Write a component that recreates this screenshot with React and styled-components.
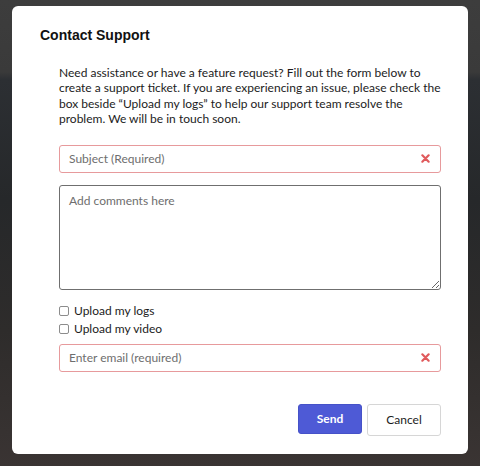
import React from "react";
import styled, { createGlobalStyle } from "styled-components";

const Global = createGlobalStyle`
  html, body { margin: 0; padding: 0; }
  body {
    width: 480px;
    height: 466px;
    overflow: hidden;
    background: linear-gradient(180deg, #3d3d3d 0px, #3a3a3a 72px, #2c2f33 80px, #26282a 200px, #2e2c2b 330px, #3a3433 466px);
  }
`;

const Backdrop = styled.div`
  width: 480px;
  height: 466px;
  padding: 6px 12px 12px 12px;
  box-sizing: border-box;
`;

const Modal = styled.div`
  height: 448px;
  background: #fff;
  border-radius: 6px;
  box-sizing: border-box;
  padding: 20px 27px 0 28px;
  display: flex;
  flex-direction: column;
`;

const Title = styled.h2`
  margin: 0;
  font-family: "Liberation Sans", Arial, sans-serif;
  font-weight: 700;
  font-size: 14px;
  line-height: 18px;
  color: #111;
`;

const Body = styled.div`
  padding-left: 19px;
  margin-top: 21px;
  display: flex;
  flex-direction: column;
  font-family: Lato, "Noto Sans", sans-serif;
`;

const Intro = styled.p`
  margin: 0;
  font-size: 12px;
  line-height: 15.4px;
  color: #1c1c1c;
`;

const Field = styled.div`
  height: 28px;
  box-sizing: border-box;
  border: 1px solid ${p => (p.$invalid ? "#e79a9c" : "#8a8a8a")};
  border-radius: 3px;
  margin-top: ${p => p.$mt}px;
  display: flex;
  align-items: center;
  padding: 0 9px;
`;

const Input = styled.input`
  flex: 1;
  border: none;
  outline: none;
  font-family: Lato, "Noto Sans", sans-serif;
  font-size: 12px;
  color: #222;
  padding: 0;
  background: transparent;
  &::placeholder { color: #6e6e6e; }
`;

const ClearIcon = styled.svg`
  width: 9px;
  height: 9px;
  flex: none;
  margin-right: 1px;
`;

const Textarea = styled.textarea`
  margin-top: 12px;
  height: 105px;
  box-sizing: border-box;
  border: 1px solid #6f6f6f;
  border-radius: 3px;
  padding: 7px 9px;
  font-family: Lato, "Noto Sans", sans-serif;
  font-size: 12px;
  resize: vertical;
  outline: none;
  &::placeholder { color: #6e6e6e; }
`;

const Checks = styled.div`
  margin-top: 14px;
  display: flex;
  flex-direction: column;
  gap: 4px;
`;

const CheckRow = styled.label`
  display: flex;
  align-items: center;
  gap: 5px;
  font-size: 12px;
  line-height: 14px;
  color: #1c1c1c;
`;

const Box = styled.span`
  width: 10px;
  height: 10px;
  border: 1px solid #8c8c8c;
  border-radius: 2px;
  box-sizing: border-box;
  background: #fff;
`;

const Actions = styled.div`
  margin-top: 32px;
  display: flex;
  justify-content: flex-end;
  gap: 5px;
`;

const Button = styled.button`
  height: ${p => (p.$primary ? 30 : 32)}px;
  width: ${p => (p.$primary ? 64 : 74)}px;
  border-radius: 3px;
  font-family: Lato, "Noto Sans", sans-serif;
  font-size: 12px;
  font-weight: ${p => (p.$primary ? 700 : 400)};
  color: ${p => (p.$primary ? "#fff" : "#1c1c1c")};
  background: ${p => (p.$primary ? "#4e5ad6" : "#fff")};
  border: 1px solid ${p => (p.$primary ? "#4652c8" : "#d6d6d6")};
  padding: 0;
  cursor: pointer;
`;

const Clear = () => (
  <ClearIcon viewBox="0 0 10 10">
    <path d="M1.5 1.5 L8.5 8.5 M8.5 1.5 L1.5 8.5" stroke="#e05a5c" strokeWidth="2.4" strokeLinecap="round" />
  </ClearIcon>
);

export default function App() {
  return (
    <>
      <Global />
      <Backdrop>
        <Modal>
          <Title>Contact Support</Title>
          <Body>
            <Intro>
              Need assistance or have a feature request? Fill out the form below to
              create a support ticket. If you are experiencing an issue, please check the
              box beside “Upload my logs” to help our support team resolve the
              problem. We will be in touch soon.
            </Intro>
            <Field $invalid $mt={18}>
              <Input placeholder="Subject (Required)" />
              <Clear />
            </Field>
            <Textarea placeholder="Add comments here" />
            <Checks>
              <CheckRow><Box />Upload my logs</CheckRow>
              <CheckRow><Box />Upload my video</CheckRow>
            </Checks>
            <Field $invalid $mt={8}>
              <Input placeholder="Enter email (required)" />
              <Clear />
            </Field>
            <Actions>
              <Button $primary>Send</Button>
              <Button>Cancel</Button>
            </Actions>
          </Body>
        </Modal>
      </Backdrop>
    </>
  );
}
